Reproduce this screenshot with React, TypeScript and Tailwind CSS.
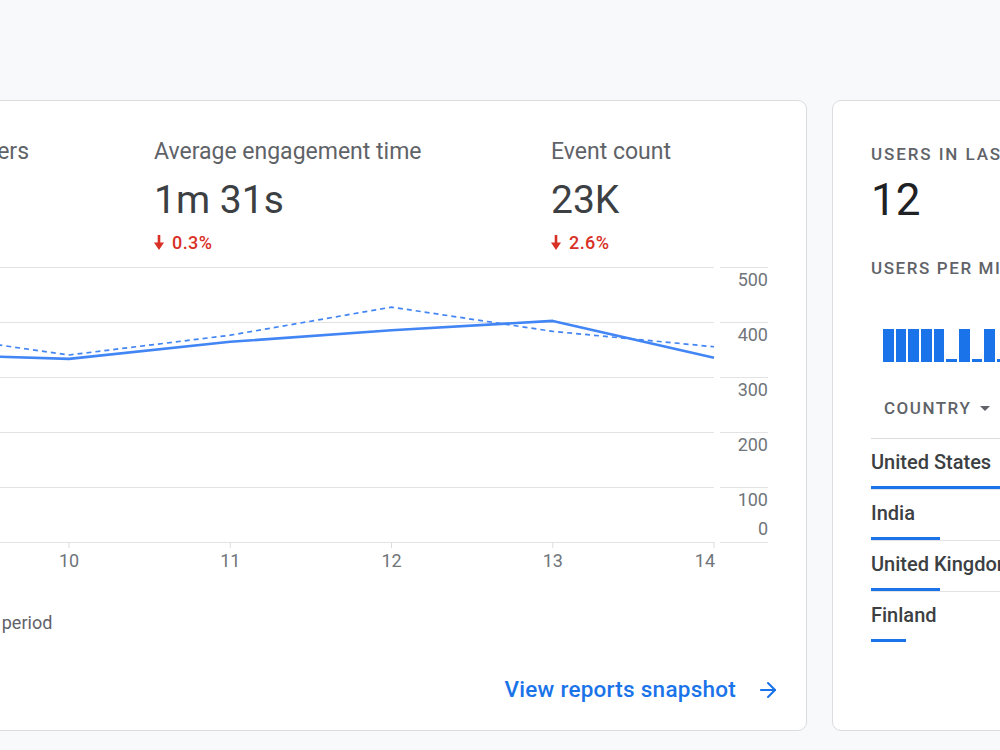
import { ArrowRight } from 'lucide-react'

const metrics = [
  { label: 'Users', value: '1.6K', change: '1.1%', width: 'w-[300px]' },
  { label: 'New users', value: '1.6K', change: '0.8%', width: 'w-[233px]' },
  { label: 'Average engagement time', value: '1m 31s', change: '0.3%', width: 'w-[397px]' },
  { label: 'Event count', value: '23K', change: '2.6%', width: 'w-[300px]' },
]

// day number -> x on the plot, values are users
const dayX = (d: number) => 714 - (14 - d) * 161.25
const valY = (v: number) => 542 - v * 0.55

const thisPeriod = [
  [8, 327],
  [9, 342],
  [10, 333],
  [11, 364],
  [12, 385],
  [13, 402],
  [14, 335],
]
const prevPeriod = [
  [8, 366],
  [9, 382],
  [10, 340],
  [11, 376],
  [12, 427],
  [13, 383],
  [14, 355],
]

const toPoints = (rows: number[][]) => rows.map(([d, v]) => `${dayX(d)},${valY(v)}`).join(' ')

const yTicks = [
  { v: 500, label: '500' },
  { v: 400, label: '400' },
  { v: 300, label: '300' },
  { v: 200, label: '200' },
  { v: 100, label: '100' },
]

const perMinute = [1, 1, 1, 1, 1, 0, 1, 0, 1, 0, 1, 1, 0, 0, 1, 0, 1, 1, 0, 1, 0, 0, 1, 0, 1, 1, 0, 1]

const countries = [
  { name: 'United States', bar: 'w-full', line: true },
  { name: 'India', bar: 'w-[69px]', line: true },
  { name: 'United Kingdom', bar: 'w-[69px]', line: true },
  { name: 'Finland', bar: 'w-[35px]', line: false },
]

function DownArrow() {
  return (
    <svg width="10" height="15" viewBox="0 0 10 15" className="shrink-0">
      <rect x="3.7" y="0" width="2.6" height="8.5" fill="#d93025" />
      <path d="M0 7.5 L10 7.5 L5 15 Z" fill="#d93025" />
    </svg>
  )
}

function TrendChart() {
  return (
    <svg width="1170" height="316" viewBox="-399 262 1170 316" className="mt-[9px] block shrink-0">
      {[...yTicks, { v: 0, label: '0' }].map((t) => (
        <g key={t.v}>
          <line x1={-399} x2={714} y1={valY(t.v) + 0.5} y2={valY(t.v) + 0.5} stroke="#e3e3e3" strokeWidth="1" />
          <line x1={720} x2={768} y1={valY(t.v) + 0.5} y2={valY(t.v) + 0.5} stroke="#e3e3e3" strokeWidth="1" />
        </g>
      ))}
      {yTicks.map((t) => (
        <text key={t.v} x={768} y={valY(t.v) + 18.5} textAnchor="end" fontSize="18" fill="#70757a">
          {t.label}
        </text>
      ))}
      <text x={768} y={534.5} textAnchor="end" fontSize="18" fill="#70757a">
        0
      </text>
      {[8, 9, 10, 11, 12, 13, 14].map((d) => (
        <g key={d}>
          <line x1={dayX(d)} x2={dayX(d)} y1={542} y2={548} stroke="#dadce0" strokeWidth="1" />
          <text
            x={d === 14 ? dayX(d) + 1 : dayX(d)}
            y={566.5}
            textAnchor={d === 14 ? 'end' : 'middle'}
            fontSize="18"
            fill="#70757a"
          >
            {d}
          </text>
        </g>
      ))}
      <polyline
        points={toPoints(prevPeriod)}
        fill="none"
        stroke="#4285f4"
        strokeWidth="1.7"
        strokeDasharray="5 4"
      />
      <polyline
        points={toPoints(thisPeriod)}
        fill="none"
        stroke="#4285f4"
        strokeWidth="2.6"
        strokeLinejoin="round"
      />
    </svg>
  )
}

function OverviewCard() {
  return (
    <div className="ml-[-400px] flex h-[631px] w-[1207px] shrink-0 flex-col rounded-[9px] border border-[#dadce0] bg-white">
      <div className="flex pl-[20px] pt-[37px]">
        {metrics.map((m) => (
          <div key={m.label} className={`${m.width} shrink-0`}>
            <div className="text-[23px] leading-[28px] text-[#5f6368]">{m.label}</div>
            <div className="mt-[10px] text-[39px] leading-[48px] text-[#3c4043]">{m.value}</div>
            <div className="mt-[7px] flex h-[22px] items-center gap-[8px] text-[18px] font-medium tracking-[0.4px] text-[#d93025]">
              <DownArrow />
              <span>{m.change}</span>
            </div>
          </div>
        ))}
      </div>

      <TrendChart />

      {/* legend */}
      <div className="mt-[32px] flex h-[24px] items-center pl-[24px] text-[18px] text-[#5f6368]">
        <div className="flex w-[275px] shrink-0 items-center gap-[8px]">
          <span className="h-[3px] w-[20px] bg-[#4285f4]" />
          <span>This period</span>
        </div>
        <div className="flex items-center gap-[8px]">
          <span className="w-[20px] border-t-2 border-dashed border-[#4285f4]" />
          <span>Previous period</span>
        </div>
      </div>

      <div className="mt-[42px] flex h-[28px] items-center justify-end gap-[20px] pr-[26px] text-[22.5px] font-medium tracking-[0.25px] text-[#1a73e8]">
        <span>View reports snapshot</span>
        <ArrowRight size={24} strokeWidth={2.1} />
      </div>
    </div>
  )
}

function RealtimeCard() {
  return (
    <div className="flex h-[631px] w-[360px] shrink-0 flex-col rounded-[9px] border border-[#dadce0] bg-white pl-[38px] pt-[42px]">
      <div className="whitespace-nowrap text-[17px] font-medium leading-[22px] tracking-[1.9px] text-[#5f6368]">
        USERS IN LAST 30 MINUTES
      </div>
      <div className="mt-[11px] text-[44px] leading-[48px] text-[#202124]">12</div>
      <div className="mt-[33px] whitespace-nowrap text-[17px] font-medium leading-[22px] tracking-[1.6px] text-[#5f6368]">
        USERS PER MINUTE
      </div>

      <div className="mt-[50px] flex h-[33px] items-end gap-[2px] pl-[12px]">
        {perMinute.map((on, i) => (
          <div key={i} className={`w-[10.67px] shrink-0 bg-[#1a73e8] ${on ? 'h-[33px]' : 'h-[3px]'}`} />
        ))}
      </div>

      <div className="mt-[35px] flex h-[42px] items-start border-b border-[#dadce0] pl-[13px]">
        <div className="flex items-center gap-[9px] text-[17px] font-medium leading-[22px] tracking-[1.5px] text-[#5f6368]">
          <span>COUNTRY</span>
          <svg width="10" height="5" viewBox="0 0 10 5">
            <path d="M0 0 L10 0 L5 5 Z" fill="#5f6368" />
          </svg>
        </div>
      </div>

      {countries.map((c) => (
        <div key={c.name} className="flex h-[51px] flex-col">
          <div className="pt-[10px] text-[20px] font-medium leading-[26px] whitespace-nowrap text-[#3c4043]">{c.name}</div>
          <div className={`mt-auto flex h-[4px] items-start ${c.line ? 'border-b border-[#e3e3e3]' : ''}`}>
            <div className={`${c.bar} h-[3px] bg-[#1a73e8]`} />
          </div>
        </div>
      ))}
    </div>
  )
}

export default function App() {
  return (
    <div className="h-[750px] w-[1000px] overflow-hidden bg-[#f8f9fa] font-['Roboto',sans-serif]">
      <div className="flex gap-[25px] pt-[100px]">
        <OverviewCard />
        <RealtimeCard />
      </div>
    </div>
  )
}
